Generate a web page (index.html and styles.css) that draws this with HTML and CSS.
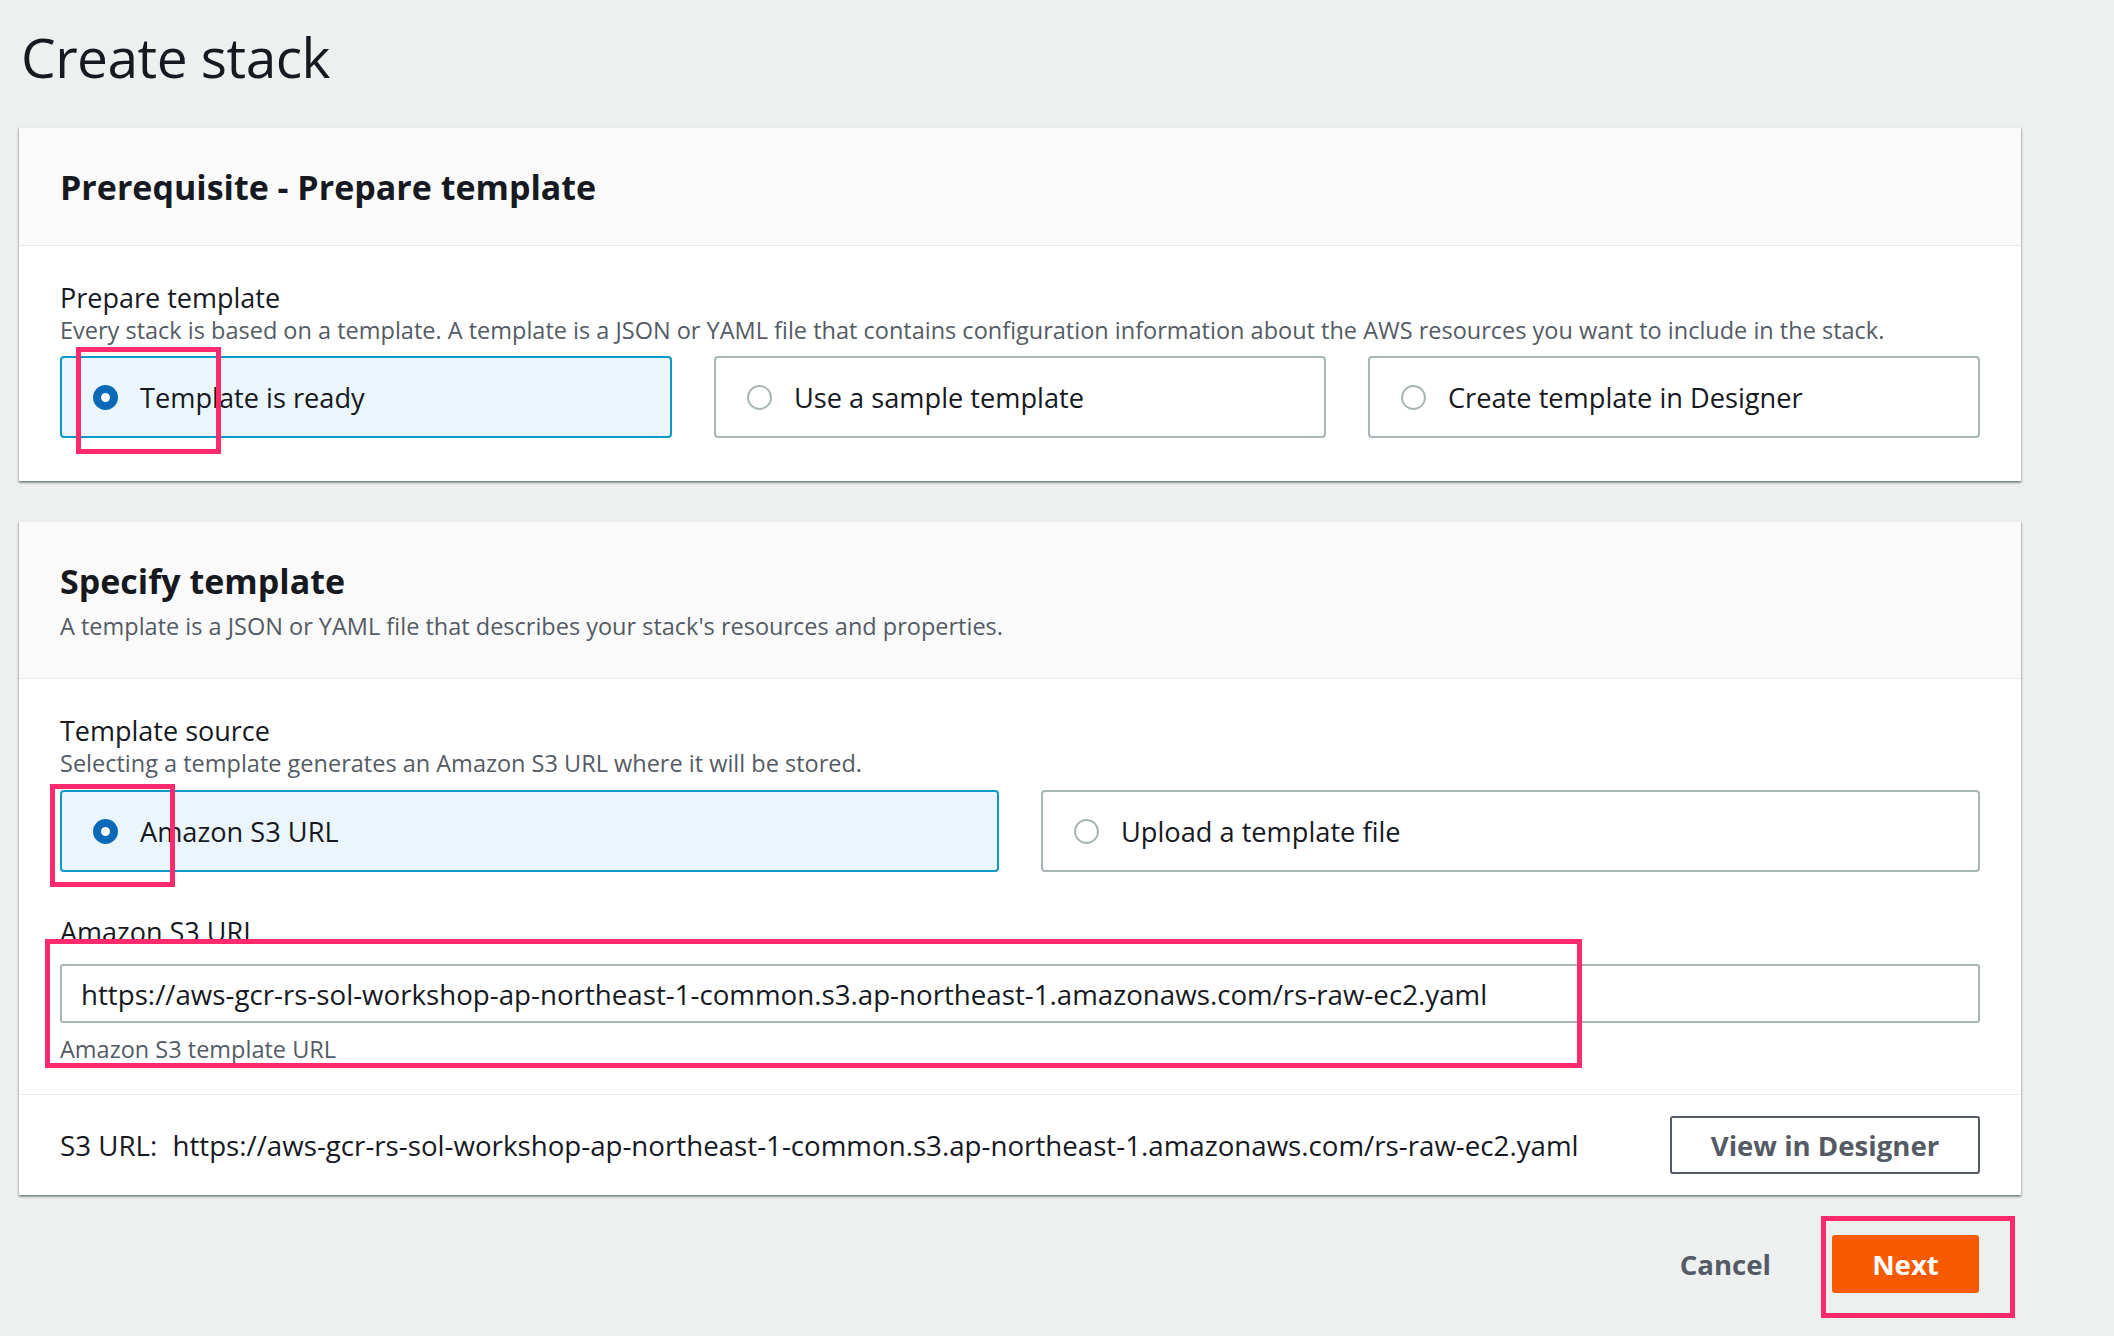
FILE: index.html
```html
<!DOCTYPE html>
<html>
  <head>
    <meta name="viewport" content="width=device-width, initial-scale=1.0" />
    <link rel="stylesheet" href="styles.css">
  </head>
  <body>
    <div class="page">
      <h1>Create stack</h1>

      <div class="card">
        <div class="card-header">
          <h2>Prerequisite - Prepare template</h2>
        </div>
        <div class="card-body">
          <div class="field-label">Prepare template</div>
          <div class="field-desc">
            Every stack is based on a template. A template is a JSON or YAML file
            that contains configuration information about the AWS resources you
            want to include in the stack.
          </div>
          <div class="tiles tiles-3">
            <label class="tile selected">
              <span class="radio"></span>
              Template is ready
              <span class="mark mark-ready"></span>
            </label>
            <label class="tile">
              <span class="radio"></span>
              Use a sample template
            </label>
            <label class="tile">
              <span class="radio"></span>
              Create template in Designer
            </label>
          </div>
        </div>
      </div>

      <div class="card">
        <div class="card-header with-desc">
          <h2>Specify template</h2>
          <div class="header-desc">
            A template is a JSON or YAML file that describes your stack's
            resources and properties.
          </div>
        </div>
        <div class="card-body body-source">
          <div class="field-label">Template source</div>
          <div class="field-desc">
            Selecting a template generates an Amazon S3 URL where it will be stored.
          </div>
          <div class="tiles tiles-2">
            <label class="tile selected">
              <span class="radio"></span>
              Amazon S3 URL
              <span class="mark mark-s3"></span>
            </label>
            <label class="tile">
              <span class="radio"></span>
              Upload a template file
            </label>
          </div>
          <div class="url-field">
            <div class="field-label">Amazon S3 URL</div>
            <div class="input">https://aws-gcr-rs-sol-workshop-ap-northeast-1-common.s3.ap-northeast-1.amazonaws.com/rs-raw-ec2.yaml</div>
            <div class="field-hint">Amazon S3 template URL</div>
            <span class="mark mark-url"></span>
          </div>
        </div>
        <div class="card-footer">
          <div class="s3-url">
            <span class="s3-key">S3 URL:</span>
            https://aws-gcr-rs-sol-workshop-ap-northeast-1-common.s3.ap-northeast-1.amazonaws.com/rs-raw-ec2.yaml
          </div>
          <button class="btn btn-normal">View in Designer</button>
        </div>
      </div>

      <div class="actions">
        <button class="btn-link">Cancel</button>
        <div class="next-wrap">
          <button class="btn btn-primary">Next</button>
          <span class="mark mark-next"></span>
        </div>
      </div>
    </div>
  </body>
</html>
```

FILE: styles.css
```css
body {
  margin: 0;
  background: #eef0ef;
  font-family: "Open Sans", "Liberation Sans", sans-serif;
  color: #16191f;
}
.page {
  padding: 22px 93px 60px 19px;
}
h1 {
  margin: 0 0 35px 2px;
  font-size: 55px;
  line-height: 70px;
  font-weight: 400;
  letter-spacing: -0.5px;
}
.card {
  background: #fff;
  border-top: 1px solid #eaeded;
  box-shadow: 0 2px 2px 0 rgba(0, 28, 36, 0.35), 1px 1px 2px 0 rgba(0, 28, 36, 0.15),
    -1px 1px 2px 0 rgba(0, 28, 36, 0.15);
  margin-bottom: 40px;
}
.card-header {
  background: #fafafa;
  border-bottom: 1px solid #eaeded;
  padding: 40px 41px 39px;
}
.card-header.with-desc {
  padding-bottom: 36px;
}
.card-header h2 {
  margin: 0;
  font-size: 34px;
  line-height: 38px;
  font-weight: 700;
}
.header-desc {
  margin-top: 10px;
  font-size: 23.5px;
  line-height: 32px;
  color: #545b64;
}
.card-body {
  padding: 36px 41px 43px;
}
.body-source {
  padding-top: 36px;
  padding-bottom: 29px;
}
.field-label {
  font-size: 27px;
  line-height: 32px;
}
.field-desc {
  font-size: 23.5px;
  line-height: 32px;
  color: #545b64;
}
.tiles {
  display: grid;
  gap: 42px;
  margin-top: 10px;
}
.tiles-3 {
  grid-template-columns: repeat(3, 1fr);
}
.tiles-2 {
  grid-template-columns: repeat(2, 1fr);
  margin-top: 11px;
}
.tile {
  position: relative;
  display: flex;
  align-items: center;
  height: 82px;
  box-sizing: border-box;
  padding-left: 31px;
  border: 2px solid #a9b5b6;
  border-radius: 4px;
  font-size: 27.2px;
}
.tile.selected {
  border-color: #0a99c8;
  background: #eaf6fc;
}
.radio {
  flex: none;
  width: 25px;
  height: 25px;
  box-sizing: border-box;
  border: 2px solid #a9b5b6;
  border-radius: 50%;
  background: #fff;
  margin-right: 22px;
}
.selected .radio {
  border: 8px solid #0a6ab7;
}
.url-field {
  position: relative;
  margin-top: 44px;
}
.input {
  margin-top: 16px;
  height: 59px;
  box-sizing: border-box;
  border: 2px solid #a9b5b6;
  border-radius: 3px;
  padding-left: 19px;
  display: flex;
  align-items: center;
  font-size: 27.7px;
}
.field-hint {
  margin-top: 10px;
  font-size: 23.5px;
  line-height: 32px;
  color: #545b64;
}
.card-footer {
  border-top: 1px solid #eaeded;
  display: flex;
  align-items: center;
  justify-content: space-between;
  padding: 21px 41px 21px;
}
.s3-url {
  font-size: 27.7px;
}
.s3-key {
  margin-right: 8px;
}
.btn {
  font-family: inherit;
  font-weight: 700;
  font-size: 27.6px;
  border-radius: 3px;
  height: 58px;
  cursor: pointer;
}
.btn-normal {
  width: 310px;
  background: #fff;
  color: #545b64;
  border: 2px solid #545b64;
}
.actions {
  display: flex;
  justify-content: flex-end;
  align-items: center;
  padding-right: 42px;
  margin-top: 0;
}
.btn-link {
  border: 0;
  background: none;
  font-family: inherit;
  font-weight: 700;
  font-size: 27.6px;
  color: #545b64;
  margin-right: 55px;
}
.next-wrap {
  position: relative;
}
.btn-primary {
  display: block;
  width: 147px;
  border: 0;
  background: #f75a00;
  color: #fff;
}
.mark {
  position: absolute;
  border: 5px solid #ff2a6d;
  box-sizing: border-box;
  pointer-events: none;
}
.mark-ready {
  left: 14px;
  top: -11px;
  width: 145px;
  height: 107px;
}
.mark-s3 {
  left: -12px;
  top: -8px;
  width: 125px;
  height: 103px;
}
.mark-url {
  left: -15px;
  top: 23px;
  width: 1537px;
  height: 129px;
}
.mark-next {
  left: -11px;
  top: -19px;
  width: 194px;
  height: 102px;
}
```
